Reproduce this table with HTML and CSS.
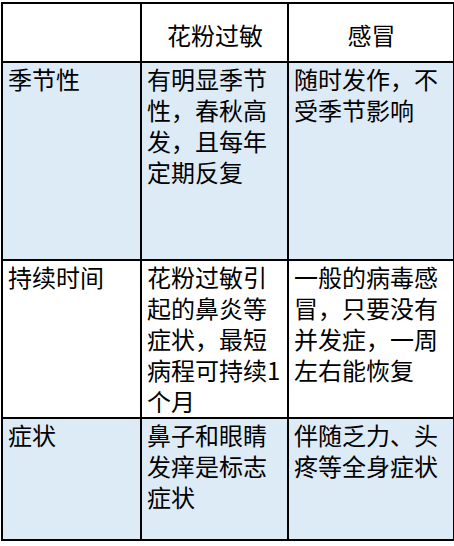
FILE: index.html
```html
<!DOCTYPE html>
<html lang="zh">
<head>
<meta charset="utf-8">
<link rel="stylesheet" href="styles.css">
</head>
<body>
<table class="grid">
  <colgroup>
    <col class="c1"><col class="c2"><col class="c3">
  </colgroup>
  <tr class="head">
    <td></td>
    <td>花粉过敏</td>
    <td>感冒</td>
  </tr>
  <tr class="r1 blue">
    <td>季节性</td>
    <td>有明显季节性，春秋高发，且每年定期反复</td>
    <td>随时发作，不受季节影响</td>
  </tr>
  <tr class="r2">
    <td>持续时间</td>
    <td>花粉过敏引起的鼻炎等症状，最短病程可持续1个月</td>
    <td>一般的病毒感冒，只要没有并发症，一周左右能恢复</td>
  </tr>
  <tr class="r3 blue">
    <td>症状</td>
    <td>鼻子和眼睛发痒是标志症状</td>
    <td>伴随乏力、头疼等全身症状</td>
  </tr>
</table>
</body>
</html>
```
FILE: styles.css
```css
html, body {
  margin: 0;
  padding: 0;
  background: #ffffff;
}
body {
  padding: 2px 0 0 1px;
  font-family: "Noto Sans CJK SC", "Noto Sans", sans-serif;
  color: #000;
}
.grid {
  border-collapse: collapse;
  table-layout: fixed;
  width: 452px;
}
.c1 { width: 139px; }
.c2 { width: 147px; }
.c3 { width: 166px; }
.grid td {
  border: 2px solid #000;
  font-size: 24px;
  line-height: 31px;
  padding: 0 4px 0 5px;
  vertical-align: top;
  word-break: break-all;
}
.blue td {
  background: #ddebf7;
}
.head td {
  height: 59px;
  text-align: center;
  vertical-align: middle;
  padding-top: 4px;
  box-sizing: border-box;
}
.r1 td { height: 196px; }
.r2 td { height: 156px; }
.r3 td { height: 120px; }
```
